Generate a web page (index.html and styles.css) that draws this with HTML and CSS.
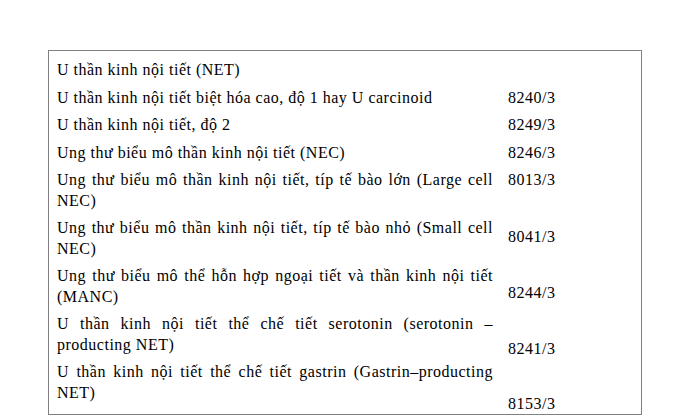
FILE: index.html
```html
<!DOCTYPE html>
<html lang="vi">
<head>
<meta charset="utf-8">
<title>Phân loại u thần kinh nội tiết</title>
<link rel="stylesheet" href="styles.css">
</head>
<body>
<div class="box">
  <div class="grid">
    <div class="name">U thần kinh nội tiết (NET)</div>
    <div class="code"></div>

    <div class="name">U thần kinh nội tiết biệt hóa cao, độ 1 hay U carcinoid</div>
    <div class="code">8240/3</div>

    <div class="name">U thần kinh nội tiết, độ 2</div>
    <div class="code">8249/3</div>

    <div class="name">Ung thư biểu mô thần kinh nội tiết (NEC)</div>
    <div class="code">8246/3</div>

    <div class="name">Ung thư biểu mô thần kinh nội tiết, típ tế bào lớn (Large cell NEC)</div>
    <div class="code">8013/3</div>

    <div class="name">Ung thư biểu mô thần kinh nội tiết, típ tế bào nhỏ (Small cell NEC)</div>
    <div class="code code-mid">8041/3</div>

    <div class="name">Ung thư biểu mô thể hỗn hợp ngoại tiết và thần kinh nội tiết (MANC)</div>
    <div class="code code-low">8244/3</div>

    <div class="name">U thần kinh nội tiết thể chế tiết serotonin (serotonin – producting NET)</div>
    <div class="code code-line2">8241/3</div>

    <div class="name">U thần kinh nội tiết thể chế tiết gastrin (Gastrin–producting NET)</div>
    <div class="code code-below">8153/3</div>
  </div>
</div>
</body>
</html>
```

FILE: styles.css
```css
html, body {
  margin: 0;
  padding: 0;
  background: #ffffff;
}

body {
  font-family: "Liberation Serif", "Times New Roman", serif;
  font-size: 16px;
  line-height: 20.5px;
  letter-spacing: 0.5px;
  color: #000000;
}

.box {
  box-sizing: border-box;
  margin: 50px 0 0 48px;
  width: 594px;
  height: 365px;
  border: 1px solid #808080;
  padding: 9px 8px 0 8px;
}

.grid {
  display: grid;
  grid-template-columns: 436px 1fr;
  column-gap: 15px;
  row-gap: 7px;
}

.name {
  text-align: justify;
}

.code {
  white-space: nowrap;
}

.code-mid {
  padding-top: 9px;
}

.code-low {
  padding-top: 17px;
}

.code-line2 {
  padding-top: 25px;
  margin-bottom: -6px;
}

.code-below {
  padding-top: 32px;
  margin-bottom: -12px;
}
```
